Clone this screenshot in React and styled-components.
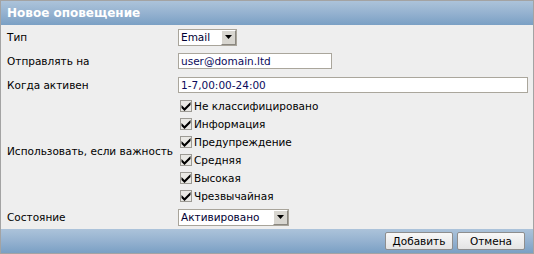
import React from 'react';
import styled, { createGlobalStyle } from 'styled-components';

const GlobalStyle = createGlobalStyle`
  html, body {
    margin: 0;
    padding: 0;
    background: #ffffff;
  }
  body {
    font-family: "DejaVu Sans", Verdana, sans-serif;
    font-size: 10.5px;
  }
`;

const Dialog = styled.div`
  width: 534px;
  height: 254px;
  box-sizing: border-box;
  border: 1px solid #a3a3a3;
  background: #eeeeee;
  display: flex;
  flex-direction: column;
`;

const Bar = styled.div`
  height: 24px;
  flex: none;
  background: linear-gradient(to bottom, #acc3da 0%, #95b2d0 50%, #7aa0c4 100%);
  display: flex;
  align-items: center;
  justify-content: ${({ $end }) => ($end ? 'flex-end' : 'flex-start')};
  padding: ${({ $end }) => ($end ? '0 8px 0 0' : '0 0 0 6px')};
  gap: 4px;
`;

const Title = styled.div`
  color: #ffffff;
  font-weight: bold;
  font-size: 12px;
`;

const Form = styled.div`
  flex: 1;
  display: grid;
  grid-template-columns: 171px 1fr;
  grid-template-rows: 24px 24px 24px 108px 24px;
  padding: 0 5px 0 6px;
`;

const Label = styled.div`
  display: flex;
  align-items: center;
  color: #000;
  white-space: nowrap;
  padding-bottom: ${({ $lift }) => ($lift ? '1px' : '0')};
`;

const Cell = styled.div`
  display: flex;
  align-items: center;
`;

const SelectBox = styled.div`
  width: ${({ $w }) => $w}px;
  height: 17px;
  box-sizing: border-box;
  border: 1px solid #a8a49a;
  background: #ffffff;
  display: flex;
  align-items: stretch;
`;

const SelectText = styled.span`
  flex: 1;
  padding-left: 2px;
  line-height: 15px;
  color: #000033;
  white-space: nowrap;
  overflow: hidden;
`;

const Arrow = styled.span`
  width: 15px;
  box-sizing: border-box;
  background: #d8d6d0;
  border-top: 1px solid #ffffff;
  border-left: 1px solid #ffffff;
  border-right: 1px solid #8a8780;
  border-bottom: 1px solid #8a8780;
  display: flex;
  align-items: center;
  justify-content: center;
`;

const Input = styled.div`
  width: ${({ $w }) => ($w ? `${$w}px` : '100%')};
  height: 16px;
  box-sizing: border-box;
  border: 1px solid #aaa69c;
  background: #ffffff;
  color: #0b0b5c;
  padding-left: 2px;
  line-height: 14px;
  white-space: nowrap;
`;

const Checks = styled.div`
  display: flex;
  flex-direction: column;
  padding-left: 2px;
`;

const CheckRow = styled.div`
  height: 18px;
  display: flex;
  align-items: center;
  gap: 2px;
  color: #000;
  white-space: nowrap;
`;

const Box = styled.span`
  width: 12px;
  height: 12px;
  box-sizing: border-box;
  border: 1px solid #9c9a94;
  background: #e9e8e4;
  display: flex;
  align-items: center;
  justify-content: center;
`;

const Button = styled.button`
  height: 18px;
  width: ${({ $w }) => $w}px;
  box-sizing: border-box;
  border: 1px solid #8e8e8e;
  border-radius: 2px;
  background: linear-gradient(to bottom, #f8f8f8, #e4e4e4);
  font-family: "DejaVu Sans", Verdana, sans-serif;
  font-size: 10.5px;
  color: #000;
  padding: 0;
`;

const Caret = () => (
  <svg width="7" height="4" viewBox="0 0 7 4">
    <path d="M0 0 H7 L3.5 4 Z" fill="#000" />
  </svg>
);

const Tick = () => (
  <svg width="10" height="10" viewBox="0 0 10 10">
    <path d="M0.5 4 L3.5 7 L9.5 1 L9.5 4 L3.5 10 L0.5 7 Z" fill="#000" />
  </svg>
);

const levels = [
  'Не классифицировано',
  'Информация',
  'Предупреждение',
  'Средняя',
  'Высокая',
  'Чрезвычайная',
];

export default function App() {
  return (
    <>
      <GlobalStyle />
      <Dialog>
        <Bar>
          <Title>Новое оповещение</Title>
        </Bar>
        <Form>
          <Label>Тип</Label>
          <Cell>
            <SelectBox $w={59}>
              <SelectText>Email</SelectText>
              <Arrow><Caret /></Arrow>
            </SelectBox>
          </Cell>

          <Label>Отправлять на</Label>
          <Cell>
            <Input $w={154}>user@domain.ltd</Input>
          </Cell>

          <Label>Когда активен</Label>
          <Cell>
            <Input>1-7,00:00-24:00</Input>
          </Cell>

          <Label $lift>Использовать, если важность</Label>
          <Checks>
            {levels.map((l) => (
              <CheckRow key={l}>
                <Box><Tick /></Box>
                {l}
              </CheckRow>
            ))}
          </Checks>

          <Label>Состояние</Label>
          <Cell>
            <SelectBox $w={111}>
              <SelectText>Активировано</SelectText>
              <Arrow><Caret /></Arrow>
            </SelectBox>
          </Cell>
        </Form>
        <Bar $end>
          <Button $w={68}>Добавить</Button>
          <Button $w={68}>Отмена</Button>
        </Bar>
      </Dialog>
    </>
  );
}
